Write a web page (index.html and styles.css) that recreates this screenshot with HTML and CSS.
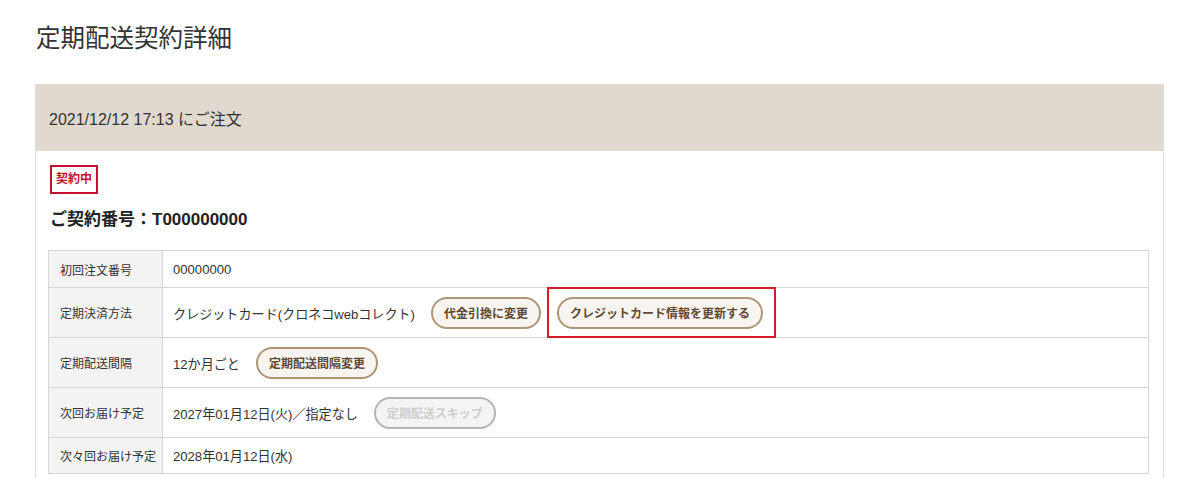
FILE: index.html
```html
<!DOCTYPE html>
<html lang="ja">
<head>
<meta charset="utf-8">
<title>定期配送契約詳細</title>
<link rel="stylesheet" href="styles.css">
</head>
<body>
<div class="page">
  <h1 class="page-title">定期配送契約詳細</h1>
  <section class="card">
    <div class="card-head">2021/12/12 17:13 にご注文</div>
    <div class="card-body">
      <span class="badge">契約中</span>
      <h2 class="contract-no">ご契約番号：T000000000</h2>
      <table class="detail">
        <tr class="row-short">
          <th>初回注文番号</th>
          <td>00000000</td>
        </tr>
        <tr>
          <th>定期決済方法</th>
          <td><span class="val">クレジットカード(クロネコwebコレクト)</span><span class="btn">代金引換に変更</span><span class="btn btn-marked">クレジットカード情報を更新する</span></td>
        </tr>
        <tr>
          <th>定期配送間隔</th>
          <td><span class="val">12か月ごと</span><span class="btn">定期配送間隔変更</span></td>
        </tr>
        <tr>
          <th>次回お届け予定</th>
          <td><span class="val">2027年01月12日(火)／指定なし</span><span class="btn btn-disabled">定期配送スキップ</span></td>
        </tr>
        <tr class="row-short">
          <th>次々回お届け予定</th>
          <td>2028年01月12日(水)</td>
        </tr>
      </table>
    </div>
  </section>
</div>
</body>
</html>
```

FILE: styles.css
```css
* { box-sizing: border-box; }
html, body { margin: 0; padding: 0; background: #fff; }
body {
  font-family: "Liberation Sans", "Noto Sans CJK JP", sans-serif;
  color: #333;
}
.page { padding: 23px 36px 0 35px; }
.page-title {
  margin: 0 0 0 1px;
  font-size: 24.5px;
  font-weight: 400;
  line-height: 31px;
  color: #333;
}
.card {
  margin-top: 30px;
  width: 1129px;
  border: 1px solid #dedede;
  border-top: none;
  height: 420px;
}
.card-head {
  background: #e0d9cf;
  height: 67px;
  display: flex;
  align-items: center;
  padding-left: 13px;
  font-size: 16px;
  color: #333;
}
.card-body { padding: 14px 14px 0 12px; }
.badge {
  display: inline-block;
  margin-left: 2px;
  border: 2px solid #c8102e;
  color: #c8102e;
  font-size: 12px;
  font-weight: 700;
  line-height: 15px;
  padding: 5px 4px;
  width: 48px;
  text-align: center;
}
.contract-no {
  margin: 14px 0 0 2px;
  font-size: 17px;
  font-weight: 700;
  line-height: 24px;
  color: #222;
  height: 42px;
}
.detail {
  width: 100%;
  border-collapse: collapse;
}
.detail th, .detail td {
  border: 1px solid #d6d6d6;
  height: 50px;
  vertical-align: middle;
}
.detail tr.row-short th, .detail tr.row-short td { height: 37px; }
.detail tr.row-short:last-child th, .detail tr.row-short:last-child td { height: 36px; }
.detail th {
  width: 114px;
  background: #f3f3f3;
  text-align: left;
  font-weight: 400;
  font-size: 12px;
  color: #333;
  padding: 0 0 0 11px;
  white-space: nowrap;
}
.detail td {
  padding: 0 0 0 10px;
  font-size: 13.1px;
  color: #333;
}
.val { vertical-align: middle; }
.btn {
  position: relative;
  display: inline-flex;
  align-items: center;
  vertical-align: middle;
  height: 32px;
  margin-left: 16px;
  padding: 0 11px;
  border: 2px solid #ad9576;
  border-radius: 17px;
  background: #f8f4ef;
  color: #5e4935;
  font-size: 12px;
  font-weight: 700;
  white-space: nowrap;
}
.btn-marked { padding: 0 11px; }
.btn-marked::after {
  content: "";
  position: absolute;
  top: -12px;
  bottom: -11px;
  left: -12px;
  right: -15px;
  border: 2px solid #d71a2a;
}
.btn-disabled {
  border-color: #b4b4b4;
  background: #f4f4f4;
  color: #cdcdcd;
}
```
